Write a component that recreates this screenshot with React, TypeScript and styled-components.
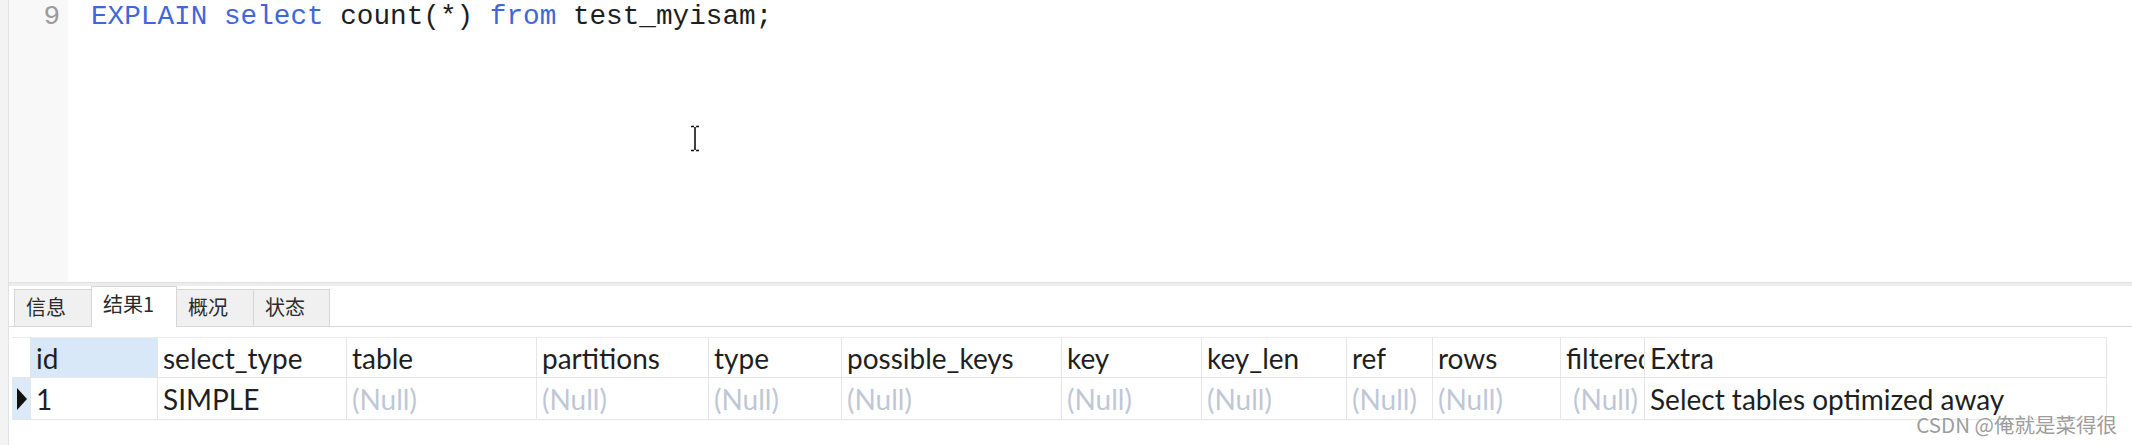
import React from "react";
import styled, { createGlobalStyle } from "styled-components";

const GlobalStyle = createGlobalStyle`
  html, body { margin: 0; padding: 0; background: #ffffff; }
  body { width: 2132px; height: 445px; overflow: hidden; }
`;

const Window = styled.div`
  position: relative;
  display: flex;
  width: 2132px;
  height: 445px;
  background: #ffffff;
  overflow: hidden;
`;

const SideEdge = styled.div`
  flex: none;
  width: 8px;
  background: #f3f3f3;
  border-right: 1px solid #e2e2e2;
`;

const Main = styled.div`
  flex: 1;
  min-width: 0;
  display: flex;
  flex-direction: column;
`;

const Editor = styled.div`
  position: relative;
  flex: none;
  height: 282px;
  display: flex;
  background: #ffffff;
`;

const Gutter = styled.div`
  flex: none;
  width: 59px;
  box-sizing: border-box;
  padding: 1px 8px 0 0;
  background: #f8f8f8;
  color: #9b9b9b;
  text-align: right;
  font: 27.7px/32px "Liberation Mono", monospace;
`;

const Code = styled.div`
  flex: 1;
  padding: 1px 0 0 23px;
  font: 27.7px/32px "Liberation Mono", monospace;
  color: #1e1e1e;
  white-space: pre;
`;

const Keyword = styled.span`
  color: #4166d8;
`;

const Caret = styled.svg`
  position: absolute;
  left: 681px;
  top: 125px;
`;

const EditorFooter = styled.div`
  flex: none;
  height: 3px;
  background: #ececec;
  border-top: 1px solid #e2e2e2;
`;

const TabStrip = styled.div`
  flex: none;
  height: 40px;
  display: flex;
  align-items: flex-end;
  padding-left: 5px;
  border-bottom: 1px solid #d8d8d8;
`;

const Tab = styled.div<{ $active?: boolean; $w: number }>`
  box-sizing: border-box;
  width: ${(p) => p.$w}px;
  height: ${(p) => (p.$active ? 41 : 37)}px;
  margin-bottom: ${(p) => (p.$active ? -1 : 0)}px;
  margin-left: -1px;
  padding: 0 0 ${(p) => (p.$active ? 6 : 3)}px 11px;
  display: flex;
  align-items: center;
  background: ${(p) => (p.$active ? "#ffffff" : "#f0f0f0")};
  border: 1px solid #d6d6d6;
  border-bottom: none;
  color: #2a2a2a;
  font: 20px/1 "Noto Sans CJK SC", sans-serif;
  &:first-child { margin-left: 0; }
`;

const columns = [19, 127, 189, 190, 172, 133, 220, 140, 145, 86, 128, 84, 462];

const Grid = styled.div`
  display: grid;
  grid-template-columns: ${columns.map((c) => `${c}px`).join(" ")};
  margin: 10px 0 0 3px;
  font-family: Lato, "Noto Sans", sans-serif;
  font-size: 28px;
`;

const Cell = styled.div<{ $head?: boolean; $bg?: string; $null?: boolean; $right?: boolean }>`
  box-sizing: border-box;
  height: ${(p) => (p.$head ? 41 : 42)}px;
  padding: ${(p) => (p.$head ? "0 5px" : "1px 6px 0 5px")};
  line-height: 40px;
  background: ${(p) => p.$bg ?? "transparent"};
  border-right: 1px solid #e6e6e6;
  border-bottom: 1px solid #e6e6e6;
  border-top: ${(p) => (p.$head ? "1px solid #ececec" : "none")};
  color: ${(p) => (p.$null ? "#bfc7d6" : "#1f1f1f")};
  text-align: ${(p) => (p.$right ? "right" : "left")};
  white-space: nowrap;
  overflow: hidden;
`;

const Indicator = styled(Cell)`
  display: flex;
  align-items: center;
  padding: 0 0 0 5px;
`;

const Watermark = styled.div`
  position: absolute;
  right: 15px;
  bottom: 11px;
  font: 20.5px/1 "Noto Sans CJK SC", sans-serif;
  color: #9d9d9d;
  text-shadow: 0 0 2px #ffffff;
`;

const headers = [
  "id",
  "select_type",
  "table",
  "partitions",
  "type",
  "possible_keys",
  "key",
  "key_len",
  "ref",
  "rows",
  "filtered",
  "Extra",
];

type Val = { text: string; isNull?: boolean; right?: boolean };
const row: Val[] = [
  { text: "1" },
  { text: "SIMPLE" },
  { text: "(Null)", isNull: true },
  { text: "(Null)", isNull: true },
  { text: "(Null)", isNull: true },
  { text: "(Null)", isNull: true },
  { text: "(Null)", isNull: true },
  { text: "(Null)", isNull: true },
  { text: "(Null)", isNull: true },
  { text: "(Null)", isNull: true },
  { text: "(Null)", isNull: true, right: true },
  { text: "Select tables optimized away" },
];

export default function App() {
  return (
    <Window>
      <GlobalStyle />
      <SideEdge />
      <Main>
        <Editor>
          <Gutter>9</Gutter>
          <Code>
            <Keyword>EXPLAIN</Keyword> <Keyword>select</Keyword> count(*) <Keyword>from</Keyword> test_myisam;
          </Code>
          <Caret width="10" height="27" viewBox="0 0 10 27">
            <path d="M1 1.5h3M6 1.5h3M5 2v23M1 25.5h3M6 25.5h3" stroke="#111" strokeWidth="1.6" fill="none" />
          </Caret>
        </Editor>
        <EditorFooter />
        <TabStrip>
          <Tab $w={78}>信息</Tab>
          <Tab $w={86} $active>结果1</Tab>
          <Tab $w={78}>概况</Tab>
          <Tab $w={77}>状态</Tab>
        </TabStrip>
        <Grid>
          <Indicator $head />
          {headers.map((h, i) => (
            <Cell key={h} $head $bg={i === 0 ? "#d9e8f8" : undefined}>
              {h}
            </Cell>
          ))}
          <Indicator $bg="#dce9f7">
            <svg width="10" height="22" viewBox="0 0 10 22">
              <polygon points="0,0 10,11 0,22" fill="#111" />
            </svg>
          </Indicator>
          {row.map((v, i) => (
            <Cell key={i} $null={v.isNull} $right={v.right}>
              {v.text}
            </Cell>
          ))}
        </Grid>
      </Main>
      <Watermark>CSDN @俺就是菜得很</Watermark>
    </Window>
  );
}
